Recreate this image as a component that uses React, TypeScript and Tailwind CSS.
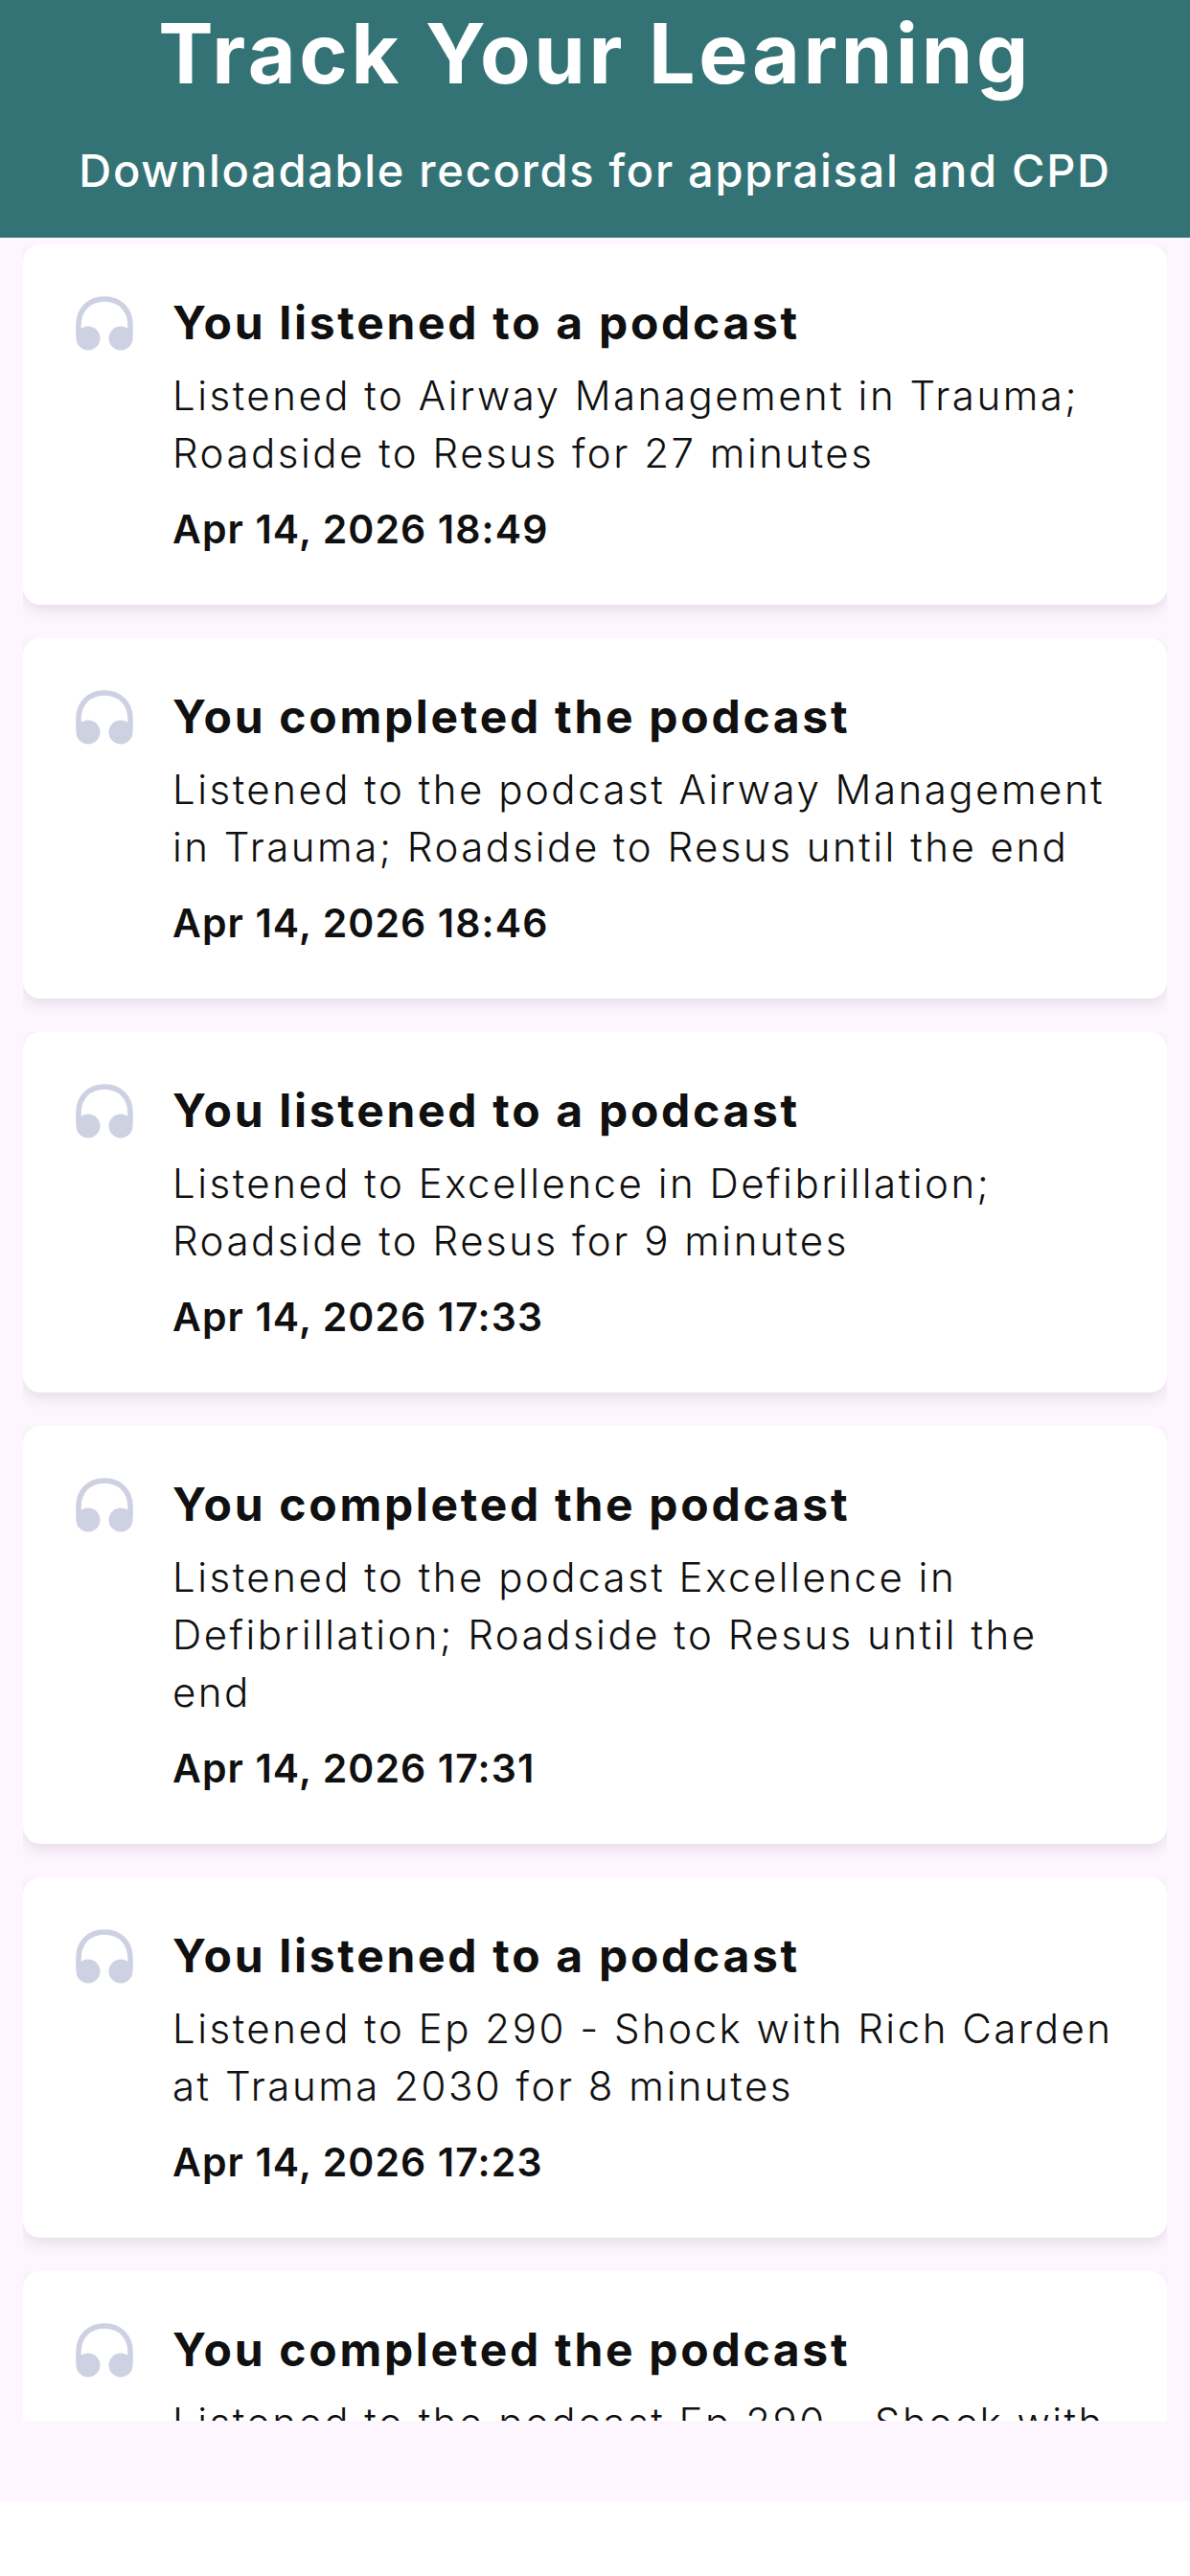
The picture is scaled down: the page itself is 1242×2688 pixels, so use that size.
const ITEMS = [
  { title: 'You listened to a podcast', body: 'Listened to Airway Management in Trauma; Roadside to Resus for 27 minutes', date: 'Apr 14, 2026 18:49' },
  { title: 'You completed the podcast', body: 'Listened to the podcast Airway Management in Trauma; Roadside to Resus until the end', date: 'Apr 14, 2026 18:46' },
  { title: 'You listened to a podcast', body: 'Listened to Excellence in Defibrillation; Roadside to Resus for 9 minutes', date: 'Apr 14, 2026 17:33' },
  { title: 'You completed the podcast', body: 'Listened to the podcast Excellence in Defibrillation; Roadside to Resus until the end', date: 'Apr 14, 2026 17:31' },
  { title: 'You listened to a podcast', body: 'Listened to Ep 290 - Shock with Rich Carden at Trauma 2030 for 8 minutes', date: 'Apr 14, 2026 17:23' },
  { title: 'You completed the podcast', body: 'Listened to the podcast Ep 290 - Shock with Rich Carden at Trauma 2030 until the end', date: 'Apr 14, 2026 17:21' },
]

function HeadphonesIcon() {
  return (
    <svg className="mt-[2px] shrink-0 text-[#cdd1e2]" width="62" height="58" viewBox="0 0 62 58" fill="none">
      <path d="M4 42V30C4 14 15 3 31 3C47 3 58 14 58 30V42" stroke="currentColor" strokeWidth="5.5" />
      <circle cx="14" cy="44" r="12.5" fill="currentColor" />
      <circle cx="48" cy="44" r="12.5" fill="currentColor" />
    </svg>
  )
}

export default function App() {
  return (
    <div className="h-[2688px] bg-white font-['Inter','Noto_Sans',sans-serif]">
      <div className="flex h-[2610px] flex-col bg-[#fdf6fe]">
        <header className="flex h-[248px] shrink-0 flex-col items-center bg-[#347375] text-white">
          <h1 className="mt-[16px] text-[86px] leading-[80px] font-bold tracking-[3.6px]">Track Your Learning</h1>
          <p className="mt-[52px] text-[47px] leading-[60px] font-medium tracking-[1.7px]">Downloadable records for appraisal and CPD</p>
        </header>

        <div className="h-[2278px] shrink-0 overflow-hidden px-[24px] pt-[7px]">
          {ITEMS.map((item, i) => (
            <div key={i} className="overflow-hidden pb-[35px]">
              <div className="flex gap-[40px] rounded-[18px] bg-white pt-[52px] pr-[50px] pb-[49px] pl-[54px] shadow-[0_6px_14px_rgba(90,60,110,0.13)]">
                <HeadphonesIcon />
                <div className="min-w-0 flex-1 text-[#101010]">
                  <h3 className="text-[48px] leading-[60px] font-bold tracking-[2.7px]">{item.title}</h3>
                  <p className="mt-[16px] text-[42px] leading-[60px] font-light tracking-[2.5px]">{item.body}</p>
                  <p className="mt-[19px] text-[41px] leading-[60px] font-semibold tracking-[1.1px]">{item.date}</p>
                </div>
              </div>
            </div>
          ))}
        </div>
      </div>
    </div>
  )
}
